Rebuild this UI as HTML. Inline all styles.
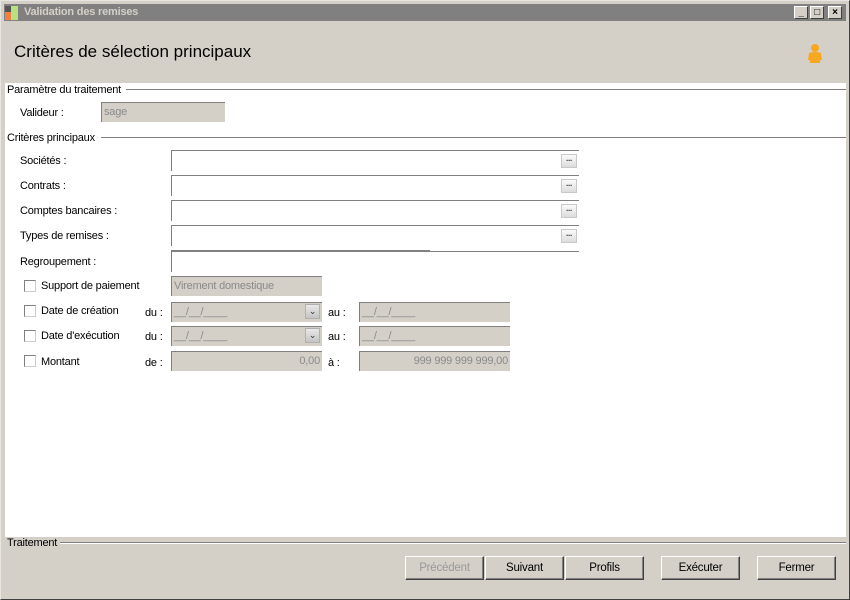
<!DOCTYPE html>
<html><head><meta charset="utf-8"><style>
*{margin:0;padding:0;box-sizing:border-box}
body{width:850px;height:600px;background:#d4d0c8;font-family:"Liberation Sans",sans-serif;font-size:11px;color:#000;position:relative;overflow:hidden;letter-spacing:-0.2px}
.a{position:absolute}
.frame{left:0;top:0;width:850px;height:600px;border:1px solid #e8e6e0;border-right-color:#404040;border-bottom-color:#404040}
.title{left:4px;top:4px;width:842px;height:17px;background:#808080;color:#d4d0c8;font-weight:bold;font-size:11px;line-height:17px;padding-left:20px}
.wb{top:6px;width:14px;height:13px;background:#d4d0c8;border:1px solid;border-color:#fff #404040 #404040 #fff;font-size:10px;line-height:11px;text-align:center;font-weight:bold}
.white{left:5px;top:83px;width:841px;height:454px;background:#fff}
.inp{height:21px;border-top:1px solid #808080;border-left:1px solid #808080;background:#fff}
.dis{background:#d4d0c8;color:#8a8a8a;padding-left:2px;line-height:19px}
.sep{height:2px;border-top:1px solid #808080;border-bottom:1px solid #fff}
.dots{width:16px;height:14px;border:1px solid #c8c8c8;background:linear-gradient(#fafafa,#dcdcdc);font-size:8px;line-height:8px;text-align:center;color:#333;font-weight:bold}
.cb{width:12px;height:12px;border:1px solid #808080;border-right-color:#ccc;border-bottom-color:#ccc;background:#fff}
.dd{width:15px;height:15px;background:linear-gradient(#e8e8e8,#c4c4c4);border:1px solid #b0b0b0;font-size:9px;text-align:center;line-height:12px;color:#333}
.btn{top:556px;height:24px;border:1px solid;border-color:#fff #404040 #404040 #fff;text-align:center;line-height:22px;font-size:11.5px;box-shadow:inset -1px -1px 0 #808080}
</style></head><body>
<div class="a frame"></div>
<div class="a title">Validation des remises</div>
<div class="a" style="left:5px;top:6px;width:6px;height:6px;background:#555"></div>
<div class="a" style="left:5px;top:12px;width:6px;height:8px;background:#f08040"></div>
<div class="a" style="left:11px;top:6px;width:7px;height:14px;background:#b8e080"></div>
<div class="a wb" style="left:794px">_</div>
<div class="a wb" style="left:810px">□</div>
<div class="a wb" style="left:828px">×</div>
<div class="a" style="left:14px;top:42px;font-size:17px;letter-spacing:0">Critères de sélection principaux</div>
<svg class="a" style="left:806px;top:43px" width="18" height="22"><circle cx="9" cy="5" r="4" fill="#f8a820"/><path d="M3 10 Q9 8 15 10 L16 17 L14 17 L14 20 L4 20 L4 17 L2 17 Z" fill="#f8a820"/></svg>
<div class="a white"></div>
<div class="a" style="left:7px;top:84px">Paramètre du traitement</div>
<div class="a sep" style="left:126px;top:89px;width:720px"></div>
<div class="a" style="left:20px;top:107px">Valideur :</div>
<div class="a inp dis" style="left:101px;top:102px;width:124px;height:20px">sage</div>
<div class="a" style="left:7px;top:132px">Critères principaux</div>
<div class="a sep" style="left:101px;top:137px;width:745px"></div>

<div class="a" style="left:20px;top:155px">Sociétés :</div>
<div class="a inp" style="left:171px;top:150px;width:408px"></div><div class="a dots" style="left:561px;top:154px">...</div>
<div class="a" style="left:20px;top:180px">Contrats :</div>
<div class="a inp" style="left:171px;top:175px;width:408px"></div><div class="a dots" style="left:561px;top:179px">...</div>
<div class="a" style="left:20px;top:205px">Comptes bancaires :</div>
<div class="a inp" style="left:171px;top:200px;width:408px"></div><div class="a dots" style="left:561px;top:204px">...</div>
<div class="a" style="left:20px;top:230px">Types de remises :</div>
<div class="a inp" style="left:171px;top:225px;width:408px"></div><div class="a dots" style="left:561px;top:229px">...</div>
<div class="a" style="left:171px;top:250px;width:259px;height:1px;background:#808080"></div>
<div class="a" style="left:20px;top:256px">Regroupement :</div>
<div class="a inp" style="left:171px;top:251px;width:408px"></div>

<div class="a cb" style="left:24px;top:280px"></div><div class="a" style="left:41px;top:280px">Support de paiement</div>
<div class="a inp dis" style="left:171px;top:276px;width:151px;height:20px">Virement domestique</div>
<div class="a cb" style="left:24px;top:305px"></div><div class="a" style="left:41px;top:305px">Date de création</div>
<div class="a" style="left:145px;top:307px">du :</div>
<div class="a inp dis" style="left:171px;top:302px;width:151px;height:20px">__/__/____</div><div class="a dd" style="left:305px;top:304px">⌄</div>
<div class="a" style="left:328px;top:307px">au :</div>
<div class="a inp dis" style="left:359px;top:302px;width:151px;height:20px">__/__/____</div>
<div class="a cb" style="left:24px;top:330px"></div><div class="a" style="left:41px;top:330px">Date d'exécution</div>
<div class="a" style="left:145px;top:331px">du :</div>
<div class="a inp dis" style="left:171px;top:326px;width:151px;height:20px">__/__/____</div><div class="a dd" style="left:305px;top:328px">⌄</div>
<div class="a" style="left:328px;top:331px">au :</div>
<div class="a inp dis" style="left:359px;top:326px;width:151px;height:20px">__/__/____</div>
<div class="a cb" style="left:24px;top:355px"></div><div class="a" style="left:41px;top:356px">Montant</div>
<div class="a" style="left:145px;top:357px">de :</div>
<div class="a inp dis" style="left:171px;top:351px;width:151px;height:20px;text-align:right;padding-right:2px">0,00</div>
<div class="a" style="left:328px;top:357px">à :</div>
<div class="a inp dis" style="left:359px;top:351px;width:151px;height:20px;text-align:right;padding-right:2px">999 999 999 999,00</div>

<div class="a" style="left:7px;top:537px">Traitement</div>
<div class="a sep" style="left:60px;top:542px;width:786px"></div>
<div class="a btn" style="left:405px;width:79px;color:#999">Précédent</div>
<div class="a btn" style="left:485px;width:79px">Suivant</div>
<div class="a btn" style="left:565px;width:79px">Profils</div>
<div class="a btn" style="left:661px;width:79px">Exécuter</div>
<div class="a btn" style="left:757px;width:79px">Fermer</div>
</body></html>
